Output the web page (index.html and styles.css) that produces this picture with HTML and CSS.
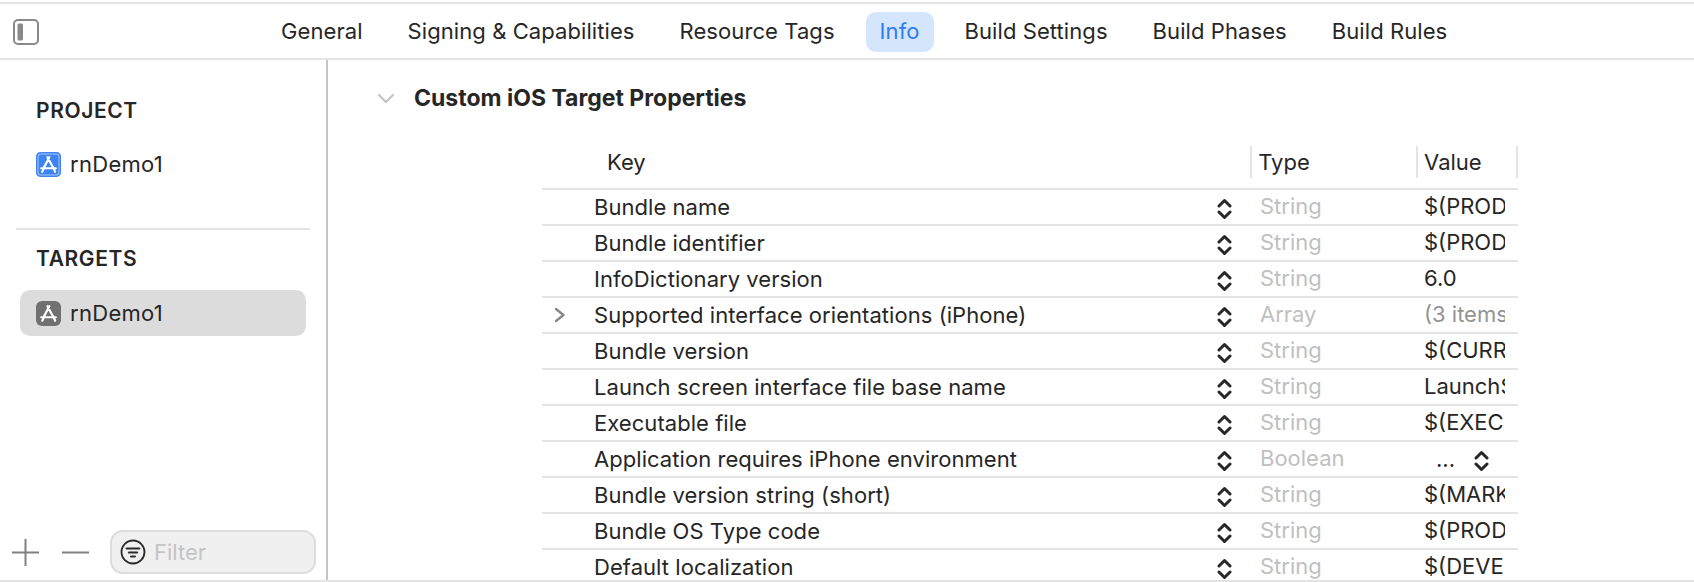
FILE: index.html
```html
<!DOCTYPE html>
<html lang="en">
<head>
<meta charset="utf-8">
<title>Info</title>
<link rel="stylesheet" href="styles.css">
</head>
<body>
<svg class="defs" width="0" height="0" aria-hidden="true">
  <symbol id="updown" viewBox="0 0 15 22">
    <path d="M2 8 L7.5 2.5 L13 8 M2 14 L7.5 19.5 L13 14" fill="none" stroke="currentColor" stroke-width="3" stroke-linecap="round" stroke-linejoin="round"/>
  </symbol>
  <symbol id="appglyph" viewBox="0 0 24 24">
    <path d="M12.8 5 L7.6 15 M11 5 L16.8 15.6 M5 15.6 H19 M7.2 16.6 L6 19 M17 16 L18.4 19" fill="none" stroke="#fff" stroke-width="2.1" stroke-linecap="round"/>
  </symbol>
</svg>
<div class="window">
  <header class="tabbar">
    <svg class="panel-toggle" viewBox="0 0 26 26" aria-hidden="true">
      <rect x="1" y="1" width="24" height="24" rx="4" fill="none" stroke="#8a8a8a" stroke-width="2"/>
      <rect x="4.5" y="4.5" width="5.5" height="17" rx="1.5" fill="#8a8a8a"/>
    </svg>
    <nav class="tabs">
      <span class="tab">General</span>
      <span class="tab">Signing &amp; Capabilities</span>
      <span class="tab">Resource Tags</span>
      <span class="tab active">Info</span>
      <span class="tab">Build Settings</span>
      <span class="tab">Build Phases</span>
      <span class="tab">Build Rules</span>
    </nav>
  </header>
  <div class="main">
    <aside class="sidebar">
      <div class="side-list">
        <h2 class="side-title">PROJECT</h2>
        <div class="side-item">
          <svg class="app-icon blue" viewBox="0 0 24 24" aria-hidden="true"><use href="#appglyph"/></svg>
          <span>rnDemo1</span>
        </div>
        <div class="side-rule"></div>
        <h2 class="side-title targets">TARGETS</h2>
        <div class="side-item selected">
          <svg class="app-icon gray" viewBox="0 0 24 24" aria-hidden="true"><use href="#appglyph"/></svg>
          <span>rnDemo1</span>
        </div>
      </div>
      <div class="side-foot">
        <svg class="foot-btn" viewBox="0 0 27 27" aria-hidden="true"><path d="M0 13.5 H27 M13.5 0 V27" stroke="#808080" stroke-width="2" fill="none"/></svg>
        <svg class="foot-btn minus" viewBox="0 0 27 27" aria-hidden="true"><path d="M0 13.5 H27" stroke="#808080" stroke-width="2" fill="none"/></svg>
        <div class="filter">
          <svg class="filter-icon" viewBox="0 0 26 26" aria-hidden="true">
            <circle cx="13" cy="13" r="11.5" fill="none" stroke="#2a2a2a" stroke-width="1.8"/>
            <path d="M6.5 9.5 H19.5 M8.8 13.5 H17.2 M11 17.5 H15" stroke="#2a2a2a" stroke-width="1.9" fill="none" stroke-linecap="round"/>
          </svg>
          <span>Filter</span>
        </div>
      </div>
    </aside>
    <section class="content">
      <div class="section-head">
        <svg class="section-chevron" viewBox="0 0 18 11" aria-hidden="true"><path d="M2 2 L9 9 L16 2" fill="none" stroke="#c4c4c4" stroke-width="2.2" stroke-linecap="round" stroke-linejoin="round"/></svg>
        <h1>Custom iOS Target Properties</h1>
      </div>
      <div class="plist">
        <div class="plist-head">
          <div class="h-key">Key</div>
          <div class="h-col h-type">Type</div>
          <div class="h-col h-value">Value</div>
          <div class="h-col h-end"></div>
        </div>
        <div class="row"><div class="disc"></div><div class="k">Bundle name</div><svg class="stepper"><use href="#updown"/></svg><div class="t">String</div><div class="v">$(PRODUCT_NAME)</div></div>
        <div class="row"><div class="disc"></div><div class="k">Bundle identifier</div><svg class="stepper"><use href="#updown"/></svg><div class="t">String</div><div class="v">$(PRODUCT_BUNDLE_IDENTIFIER)</div></div>
        <div class="row"><div class="disc"></div><div class="k">InfoDictionary version</div><svg class="stepper"><use href="#updown"/></svg><div class="t">String</div><div class="v">6.0</div></div>
        <div class="row"><div class="disc"><svg class="disc-icon" viewBox="0 0 12 16" aria-hidden="true"><path d="M2 2 L9.5 8 L2 14" fill="none" stroke="#888" stroke-width="2.4" stroke-linecap="round" stroke-linejoin="round"/></svg></div><div class="k">Supported interface orientations (iPhone)</div><svg class="stepper"><use href="#updown"/></svg><div class="t">Array</div><div class="v muted">(3 items)</div></div>
        <div class="row"><div class="disc"></div><div class="k">Bundle version</div><svg class="stepper"><use href="#updown"/></svg><div class="t">String</div><div class="v">$(CURRENT_PROJECT_VERSION)</div></div>
        <div class="row"><div class="disc"></div><div class="k">Launch screen interface file base name</div><svg class="stepper"><use href="#updown"/></svg><div class="t">String</div><div class="v">LaunchScreen</div></div>
        <div class="row"><div class="disc"></div><div class="k">Executable file</div><svg class="stepper"><use href="#updown"/></svg><div class="t">String</div><div class="v">$(EXECUTABLE_NAME)</div></div>
        <div class="row"><div class="disc"></div><div class="k">Application requires iPhone environment</div><svg class="stepper"><use href="#updown"/></svg><div class="t">Boolean</div><div class="v bool"><span>...</span><svg class="stepper"><use href="#updown"/></svg></div></div>
        <div class="row"><div class="disc"></div><div class="k">Bundle version string (short)</div><svg class="stepper"><use href="#updown"/></svg><div class="t">String</div><div class="v">$(MARKETING_VERSION)</div></div>
        <div class="row"><div class="disc"></div><div class="k">Bundle OS Type code</div><svg class="stepper"><use href="#updown"/></svg><div class="t">String</div><div class="v">$(PRODUCT_BUNDLE_PACKAGE_TYPE)</div></div>
        <div class="row"><div class="disc"></div><div class="k">Default localization</div><svg class="stepper"><use href="#updown"/></svg><div class="t">String</div><div class="v">$(DEVELOPMENT_LANGUAGE)</div></div>
      </div>
    </section>
  </div>
</div>
</body>
</html>
```
FILE: styles.css
```css
* { box-sizing: border-box; }
html, body { margin: 0; height: 100%; overflow: hidden; background: #fff; }
body { font-family: Inter, "Liberation Sans", sans-serif; font-size: 22px; color: #262626; }
.defs { position: absolute; }
.window { height: 582px; display: flex; flex-direction: column; padding-top: 2px; border-bottom: 2px solid #e4e4e4; }

.tabbar { height: 58px; flex: none; display: flex; align-items: center; border-top: 2px solid #e4e4e4; border-bottom: 2px solid #e4e4e4; padding: 2px 0 0 13px; }
.panel-toggle { width: 26px; height: 26px; flex: none; margin-right: 228px; }
.tabs { display: flex; gap: 17px; letter-spacing: .08px; }
.tab { height: 40px; line-height: 38px; padding: 0 14px; border-radius: 10px; white-space: nowrap; }
.tab.active { background: #d5e5fb; color: #2f7bf6; }

.main { flex: 1; display: flex; min-height: 0; }
.sidebar { width: 328px; flex: none; border-right: 2px solid #c4c4c4; display: flex; flex-direction: column; justify-content: space-between; padding: 0 16px 6px 12px; }
.side-title { margin: 38px 0 0 24px; font-size: 21px; line-height: 26px; font-weight: 600; letter-spacing: .6px; }
.side-title.targets { margin-top: 16px; }
.side-item { display: flex; align-items: center; gap: 9px; height: 46px; padding-left: 24px; margin-top: 17px; letter-spacing: .3px; }
.side-item.selected { background: #dcdcdc; border-radius: 10px; margin: 18px 4px 0 8px; padding-left: 16px; }
.app-icon { width: 25px; height: 25px; border-radius: 5px; flex: none; }
.app-icon.blue { background: #3f82f1; box-shadow: inset 0 0 0 1.5px #3f82f1, inset 0 0 0 2.5px #a9c8f8; }
.app-icon.gray { background: #707070; border-radius: 6px; }
.side-rule { height: 2px; background: #e4e4e4; margin: 41px 0 0 4px; }

.side-foot { display: flex; align-items: center; margin-right: -6px; }
.foot-btn { width: 27px; height: 27px; flex: none; margin-right: 23px; }
.foot-btn.minus { margin-right: 21px; }
.filter { flex: 1; height: 44px; display: flex; align-items: center; gap: 8px; padding-left: 8px; background: #f0f0f0; border: 2px solid #dcdcdc; border-radius: 13px; color: #c4c4c4; }
.filter-icon { width: 26px; height: 26px; flex: none; }

.content { flex: 1; min-width: 0; padding-left: 49px; overflow: hidden; }
.section-head { display: flex; align-items: center; gap: 19px; height: 28px; margin-top: 24px; }
.section-chevron { width: 18px; height: 11px; flex: none; }
.section-head h1 { margin: 0; font-size: 23px; font-weight: 700; }

.plist { width: 976px; margin-left: 165px; margin-top: 34px; }
.plist-head { display: flex; height: 44px; align-items: flex-start; border-bottom: 2px solid #e4e4e4; }
.h-key { width: 709px; padding-left: 65px; line-height: 32px; }
.h-col { height: 32px; line-height: 32px; border-left: 2px solid #e4e4e4; }
.h-type { width: 166px; padding-left: 6px; }
.h-value { width: 100px; padding-left: 6px; }
.h-end { width: 2px; }

.row { display: flex; align-items: center; height: 36px; border-bottom: 2px solid #e4e4e4; }
.disc { width: 52px; flex: none; display: flex; padding-left: 12px; }
.disc-icon { width: 12px; height: 16px; }
.k { width: 623px; flex: none; white-space: nowrap; letter-spacing: .05px; }
.stepper { width: 15px; height: 22px; flex: none; margin-top: 4px; color: #262626; }
.t { width: 192px; flex: none; padding-left: 28px; margin-bottom: 2px; color: #c0c0c0; white-space: nowrap; }
.v { width: 81px; flex: none; margin-bottom: 2px; overflow: hidden; white-space: nowrap; }
.v.muted { color: #949494; }
.v.bool { display: flex; align-items: center; gap: 19px; margin-bottom: 0; padding-left: 12px; overflow: visible; }
```
